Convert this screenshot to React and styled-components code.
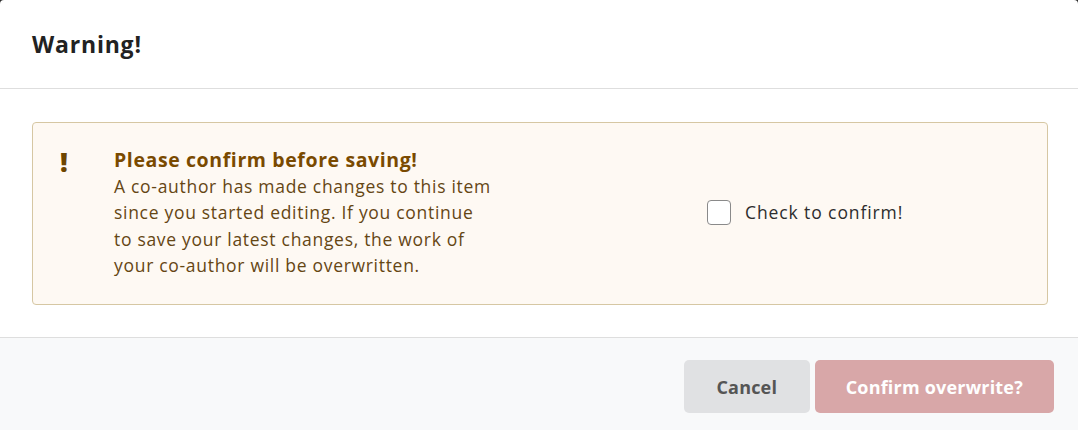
import React, { useState } from 'react'
import styled, { createGlobalStyle } from 'styled-components'

const GlobalStyle = createGlobalStyle`
  html, body {
    margin: 0;
    padding: 0;
    background: #2b2b2b;
  }
  body {
    font-family: "Open Sans", "Noto Sans", sans-serif;
  }
  * { box-sizing: border-box; }
`

const Modal = styled.div`
  width: 1078px;
  height: 430px;
  background: #fff;
  border-radius: 4px 4px 0 0;
  display: flex;
  flex-direction: column;
  overflow: hidden;
`

const Header = styled.div`
  height: 89px;
  padding: 0 32px;
  display: flex;
  align-items: center;
  border-bottom: 1px solid #dedede;
  h2 {
    margin: 0;
    font-size: 23px;
    font-weight: 700;
    color: #222;
    letter-spacing: 0.8px;
  }
`

const Body = styled.div`
  flex: 1;
  padding: 33px 30px 32px 32px;
`

const Alert = styled.div`
  height: 183px;
  background: #fef9f3;
  border: 1px solid #d6c7a3;
  border-radius: 4px;
  display: flex;
  align-items: center;
  padding: 0 0 3px 0;
`

const Icon = styled.div`
  width: 81px;
  align-self: flex-start;
  padding: 25px 0 0 27px;
  font-size: 27px;
  font-weight: 800;
  color: #6e4500;
  line-height: 1;
`

const Message = styled.div`
  width: 380px;
  color: #654614;
  font-size: 17.5px;
  letter-spacing: 0.7px;
  line-height: 26.4px;
  h3 {
    margin: 0 0 -1px;
    font-size: 19.5px;
    letter-spacing: 0.6px;
    font-weight: 700;
    color: #7a4a00;
    line-height: 28px;
    white-space: nowrap;
  }
  p { margin: 0; }
`

const Confirm = styled.label`
  margin-left: 213px;
  display: flex;
  align-items: center;
  gap: 14px;
  font-size: 17.5px;
  letter-spacing: 0.9px;
  color: #2d2d2d;
  cursor: pointer;
  input {
    appearance: none;
    margin: 0;
    width: 24px;
    height: 25px;
    border: 1px solid #8a8a8a;
    border-radius: 4px;
    background: #fff;
  }
`

const Footer = styled.div`
  height: 93px;
  background: #f8f9fa;
  border-top: 1px solid #dedede;
  display: flex;
  justify-content: flex-end;
  align-items: flex-start;
  gap: 5px;
  padding: 22px 24px 0 0;
`

const Button = styled.button`
  height: 53px;
  padding: 0 ${p => p.$pad}px;
  border: none;
  border-radius: 5px;
  font-family: inherit;
  font-size: 18px;
  font-weight: 700;
  letter-spacing: 0.2px;
  background: ${p => p.$bg};
  color: ${p => p.$color};
  cursor: pointer;
`

export default function App() {
  const [checked, setChecked] = useState(false)
  return (
    <>
      <GlobalStyle />
      <Modal>
        <Header>
          <h2>Warning!</h2>
        </Header>
        <Body>
          <Alert>
            <Icon>!</Icon>
            <Message>
              <h3>Please confirm before saving!</h3>
              <p>
                A co-author has made changes to this item since you started editing. If you continue
                to save your latest changes, the work of your co-author will be overwritten.
              </p>
            </Message>
            <Confirm>
              <input type="checkbox" checked={checked} onChange={e => setChecked(e.target.checked)} />
              Check to confirm!
            </Confirm>
          </Alert>
        </Body>
        <Footer>
          <Button $bg="#e0e1e3" $color="#555" $pad={32.5}>Cancel</Button>
          <Button $bg="#d8a7a8" $color="#fff" $pad={31}>Confirm overwrite?</Button>
        </Footer>
      </Modal>
    </>
  )
}
